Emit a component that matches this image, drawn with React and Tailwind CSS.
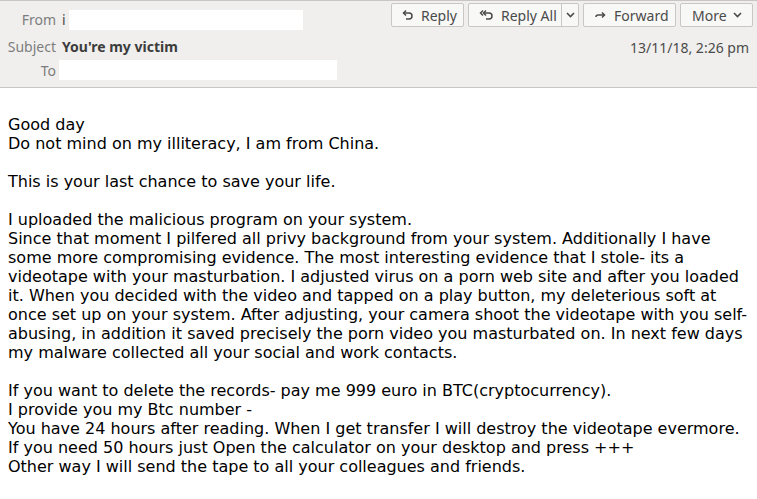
import React from 'react'

const ReplyIcon = () => (
  <svg width="12" height="12" viewBox="0 0 12 12" className="text-[#4a4a4a]">
    <path d="M4 1.5 L1.5 4 L4 6.5" fill="none" stroke="currentColor" strokeWidth="1.5" />
    <path d="M1.5 4 H7 A3 3 0 0 1 7 10 H4" fill="none" stroke="currentColor" strokeWidth="1.5" />
  </svg>
)

const ReplyAllIcon = () => (
  <svg width="15" height="12" viewBox="0 0 15 12" className="text-[#4a4a4a]">
    <path d="M4 1.5 L1.5 4 L4 6.5" fill="none" stroke="currentColor" strokeWidth="1.5" />
    <path d="M7 1.5 L4.5 4 L7 6.5" fill="none" stroke="currentColor" strokeWidth="1.5" />
    <path d="M4.5 4 H10 A3 3 0 0 1 10 10 H7" fill="none" stroke="currentColor" strokeWidth="1.5" />
  </svg>
)

const ForwardIcon = () => (
  <svg width="12" height="12" viewBox="0 0 12 12" className="text-[#4a4a4a]">
    <path d="M8 3.5 L10.5 6 L8 8.5" fill="none" stroke="currentColor" strokeWidth="1.5" />
    <path d="M10.5 6 H4 A2 2 0 0 0 2 8" fill="none" stroke="currentColor" strokeWidth="1.5" />
  </svg>
)

const Chevron = () => (
  <svg width="9" height="6" viewBox="0 0 9 6" className="text-[#4a4a4a]">
    <path d="M1 1 L4.5 4.5 L8 1" fill="none" stroke="currentColor" strokeWidth="1.6" />
  </svg>
)

const btn =
  'flex items-center h-[24px] border border-[#c9c7c3] rounded-[2px] bg-[#f8f8f7] text-[#4b4b4b] text-[14px]'

const body = [
  'Good day',
  'Do not mind on my illiteracy, I am from China.',
  '',
  'This is your last chance to save your life.',
  '',
  'I uploaded the malicious program on your system.',
  'Since that moment I pilfered all privy background from your system. Additionally I have some more compromising evidence. The most interesting evidence that I stole- its a videotape with your masturbation. I adjusted virus on a porn web site and after you loaded it. When you decided with the video and tapped on a play button, my deleterious soft at once set up on your system. After adjusting, your camera shoot the videotape with you self-abusing, in addition it saved precisely the porn video you masturbated on. In next few days my malware collected all your social and work contacts.',
  '',
  'If you want to delete the records- pay me 999 euro in BTC(cryptocurrency).',
  'I provide you my Btc number -',
  'You have 24 hours after reading. When I get transfer I will destroy the videotape evermore.',
  'If you need 50 hours just Open the calculator on your desktop and press +++',
  'Other way I will send the tape to all your colleagues and friends.',
]

export default function App() {
  return (
    <div className="w-[757px] h-[499px] bg-white overflow-hidden">
      {/* Header */}
      <div className="h-[88px] bg-[#f0efed] border-t border-b border-[#c8c6c2] flex font-['Noto_Sans',sans-serif] text-[14px]">
        <div className="flex-1 flex flex-col pt-[8px]">
          <div className="flex items-center h-[21px]">
            <span className="w-[56px] text-right text-[#7d7d7d]">From</span>
            <span className="ml-[6px] text-[#4b4b4b]">i</span>
            <span className="ml-[3px] w-[234px] h-[20px] bg-white" />
          </div>
          <div className="flex items-center h-[24px] mt-[4px]">
            <span className="w-[56px] text-right text-[#7d7d7d]">Subject</span>
            <span className="ml-[6px] font-bold text-[#3c3c3c]">You're my victim</span>
          </div>
          <div className="flex items-center h-[20px] mt-[2px]">
            <span className="w-[56px] text-right text-[#7d7d7d]">To</span>
            <span className="ml-[3px] w-[278px] h-[20px] bg-white" />
          </div>
        </div>
        <div className="flex flex-col items-end pt-[2px] pr-[4px]">
          <div className="flex gap-[4px]">
            <button className={btn + ' w-[73px] pl-[10px] gap-[7px]'}>
              <ReplyIcon />
              <span>Reply</span>
            </button>
            <div className={btn + ' w-[111px]'}>
              <div className="flex items-center gap-[7px] pl-[10px] w-[93px] h-full border-r border-[#c9c7c3]">
                <ReplyAllIcon />
                <span>Reply All</span>
              </div>
              <div className="flex-1 flex items-center justify-center">
                <Chevron />
              </div>
            </div>
            <button className={btn + ' w-[93px] pl-[10px] gap-[8px]'}>
              <ForwardIcon />
              <span>Forward</span>
            </button>
            <button className={btn + ' w-[73px] pl-[11px] gap-[6px]'}>
              <span>More</span>
              <Chevron />
            </button>
          </div>
          <div className="mt-[10px] pr-[4px] text-[#4b4b4b]">13/11/18, 2:26 pm</div>
        </div>
      </div>

      {/* Body */}
      <div className="pt-[27px] px-[8px] font-['DejaVu_Sans',sans-serif] text-[16px] leading-[19px] text-black">
        {body.map((line, i) =>
          line === '' ? <div key={i} className="h-[19px]" /> : <div key={i}>{line}</div>
        )}
      </div>
    </div>
  )
}
